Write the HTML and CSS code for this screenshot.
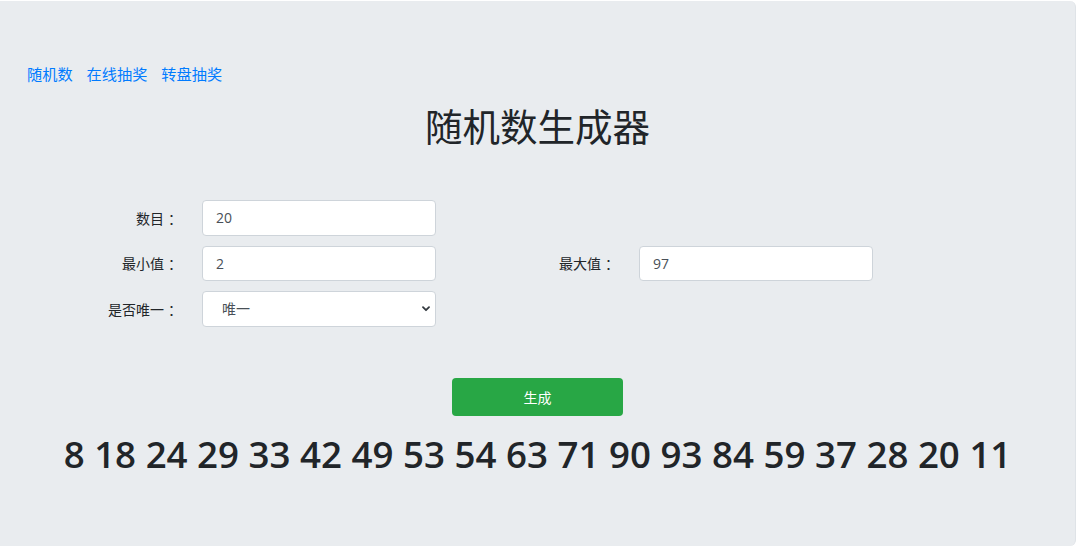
FILE: index.html
```html
<!DOCTYPE html>
<html lang="zh-CN">
<head>
    <meta charset="UTF-8">
    <meta name="viewport" content="width=device-width, initial-scale=1.0">
    <title>随机数生成器</title>
    <link rel="stylesheet" href="styles.css">
</head>
<body>
    <div class="jumbotron">
        <nav class="links">
            <a href="#">随机数</a>
            <a href="#">在线抽奖</a>
            <a href="#">转盘抽奖</a>
        </nav>
        <h1 class="title">随机数生成器</h1>
        <form class="form-grid">
            <label class="form-label" for="count">数目<span class="colon">：</span></label>
            <input class="form-control" id="count" type="text" value="20">
            <span></span>
            <span></span>

            <label class="form-label" for="min">最小值<span class="colon">：</span></label>
            <input class="form-control" id="min" type="text" value="2">
            <label class="form-label" for="max">最大值<span class="colon">：</span></label>
            <input class="form-control" id="max" type="text" value="97">

            <label class="form-label" for="unique">是否唯一<span class="colon">：</span></label>
            <div class="select-wrap">
                <select class="form-control custom-select" id="unique">
                    <option>唯一</option>
                    <option>不唯一</option>
                </select>
                <svg class="chevron" width="8" height="6" viewBox="0 0 8 6">
                    <path d="M1 1.2 L4 4.2 L7 1.2" fill="none" stroke="#343a40" stroke-width="1.8" stroke-linecap="round" stroke-linejoin="round"/>
                </svg>
            </div>
        </form>
        <div class="actions">
            <button class="btn-success" type="button">生成</button>
        </div>
        <h2 class="result">8 18 24 29 33 42 49 53 54 63 71 90 93 84 59 37 28 20 11</h2>
    </div>
</body>
</html>
```

FILE: styles.css
```css
html {
    font-size: 15px;
}
body {
    margin: 0;
    padding: 0;
    background-color: #fff;
    font-family: "Open Sans", "Noto Sans CJK SC", sans-serif;
    color: #212529;
}
.jumbotron {
    box-sizing: border-box;
    width: 1076px;
    height: 545px;
    margin-top: 1px;
    padding: 62px 27px 0 27px;
    background-color: #e9ecef;
    border-radius: 0 6px 6px 0;
    border-right: 1px solid #dfe3e7;
}
.links {
    display: flex;
    gap: 14px;
    line-height: 22px;
}
.links a {
    font-size: 15.2px;
    color: #007bff;
    text-decoration: none;
}
.title {
    margin: 19px 0 0 0;
    text-align: center;
    font-size: 37.5px;
    font-weight: 400;
    line-height: 45px;
}
.form-grid {
    display: grid;
    grid-template-columns: 161px 234px 175px 234px;
    column-gap: 14px;
    row-gap: 10px;
    margin-top: 51px;
    align-items: center;
}
.form-label {
    font-size: 14px;
    text-align: right;
    padding-right: 6px;
}
.colon {
    margin-left: 4px;
}
.form-control {
    box-sizing: border-box;
    width: 234px;
    height: 35.5px;
    padding: 0 13px;
    font-family: "Open Sans", "Noto Sans CJK SC", sans-serif;
    font-size: 14px;
    color: #495057;
    background-color: #fff;
    border: 1px solid #ced4da;
    border-radius: 4px;
    outline: none;
}
.select-wrap {
    position: relative;
    width: 234px;
}
.custom-select {
    appearance: none;
    -webkit-appearance: none;
    padding-left: 19px;
}
.chevron {
    position: absolute;
    right: 6px;
    top: 15px;
    pointer-events: none;
}
.actions {
    display: flex;
    justify-content: center;
    margin-top: 51px;
}
.btn-success {
    width: 171px;
    height: 38px;
    font-family: "Open Sans", "Noto Sans CJK SC", sans-serif;
    font-size: 14px;
    color: #fff;
    background-color: #28a745;
    border: none;
    border-radius: 4px;
    cursor: pointer;
}
.result {
    margin: 16px 0 0 0;
    text-align: center;
    font-size: 36.7px;
    font-weight: 600;
    line-height: 45px;
}
```
